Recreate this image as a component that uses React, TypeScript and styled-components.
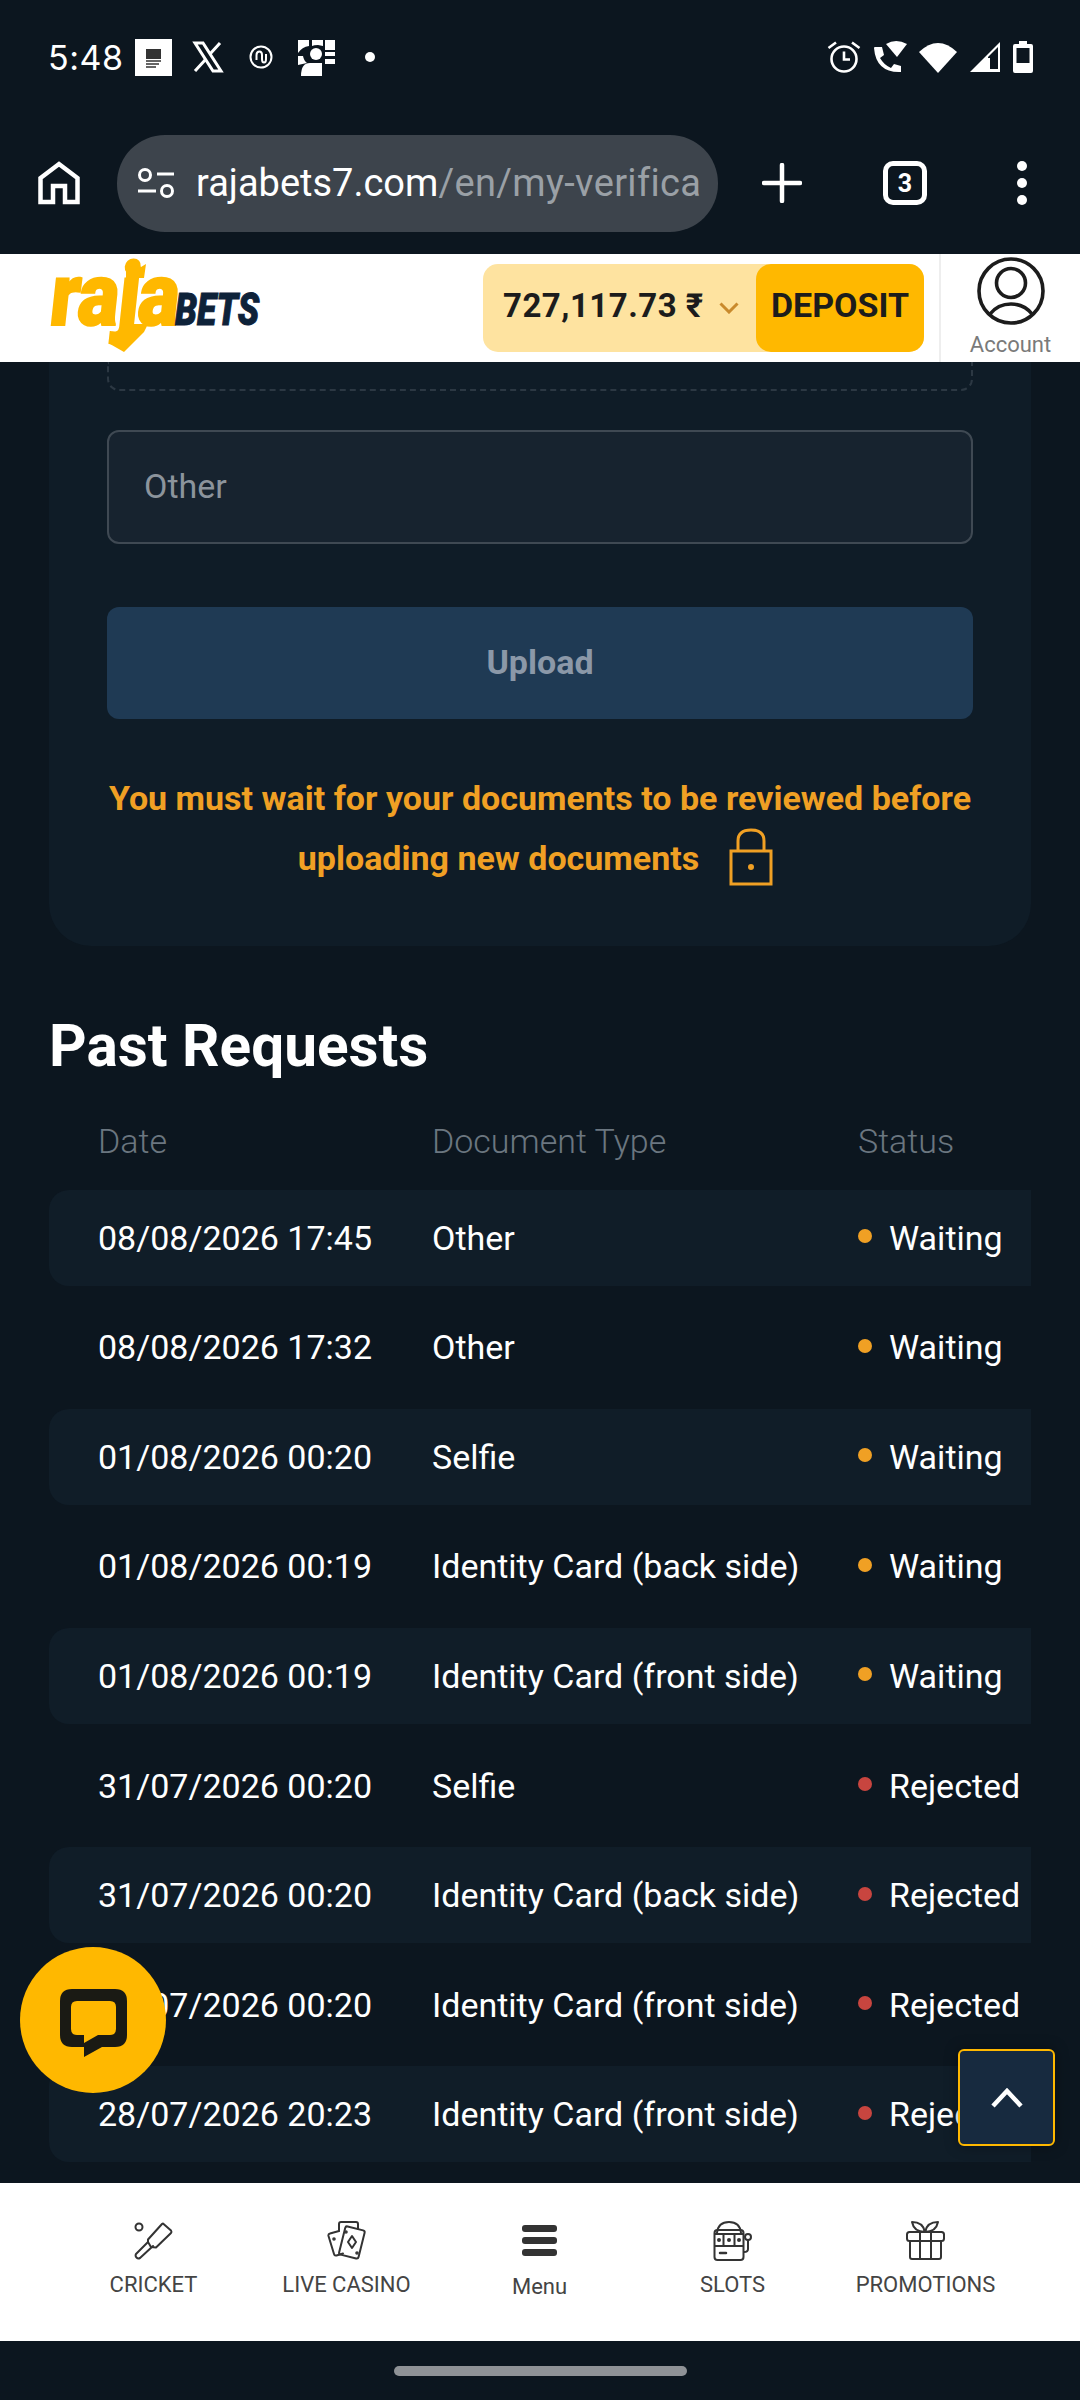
import React from 'react';
import styled, { createGlobalStyle } from 'styled-components';

const GlobalStyle = createGlobalStyle`
  html, body {
    margin: 0;
    padding: 0;
    background: #0c161f;
    font-family: Roboto, "Liberation Sans", sans-serif;
  }
  * { box-sizing: border-box; }
`;

const Screen = styled.div`
  width: 1080px;
  height: 2400px;
  display: flex;
  flex-direction: column;
  overflow: hidden;
  background: #0c161f;
`;

const StatusBar = styled.div`
  height: 114px;
  flex: none;
  display: flex;
  align-items: center;
  padding: 0 47px 0 48px;
  color: #fff;
`;

const Time = styled.span`
  font-family: Inter, Roboto, sans-serif;
  font-size: 34px;
  font-weight: 400;
  letter-spacing: 0.5px;
  width: 87px;
  flex: none;
`;

const NotifIcons = styled.div`
  display: flex;
  align-items: center;
  gap: 20px;
`;

const SysIcons = styled.div`
  margin-left: auto;
  display: flex;
  align-items: center;
  gap: 12px;
`;

const Note = styled.span<{ $w: number }>`
  display: flex;
  width: ${({ $w }) => $w}px;
  justify-content: center;
`;

const ChromeBar = styled.div`
  height: 140px;
  flex: none;
  display: flex;
  align-items: center;
  padding: 0 0 2px 38px;
`;

const UrlPill = styled.div`
  margin-left: 37px;
  width: 601px;
  height: 97px;
  border-radius: 48px;
  background: #3d444c;
  display: flex;
  align-items: center;
  padding-left: 20px;
  white-space: nowrap;
  font-size: 38px;
  color: #fff;

  span {
    color: #9aa0a6;
    letter-spacing: 0.35px;
  }
`;

const UrlText = styled.div`
  margin-left: 21px;
  width: 504px;
`;

const PlusWrap = styled.div`
  margin-left: 44px;
  display: flex;
`;

const TabCount = styled.div`
  margin-left: 81px;
  width: 44px;
  height: 44px;
  border: 5px solid #fff;
  border-radius: 10px;
  color: #fff;
  font-size: 25px;
  font-weight: 700;
  display: flex;
  align-items: center;
  justify-content: center;
`;

const KebabDots = styled.div`
  margin-left: 90px;
  display: flex;
  flex-direction: column;
  gap: 7px;

  i {
    display: block;
    width: 10px;
    height: 10px;
    border-radius: 50%;
    background: #fff;
  }
`;

const SiteHeader = styled.header`
  height: 108px;
  flex: none;
  background: #fff;
  display: flex;
  align-items: center;
  padding-left: 48px;
`;

const Logo = styled.div`
  position: relative;
  width: 212px;
  height: 88px;
  flex: none;
  display: flex;
  align-items: flex-end;
`;

const LogoRaja = styled.span`
  display: block;
  width: 130px;
  height: 62px;
  color: #ffb800;
  font-size: 88px;
  line-height: 62px;
  font-weight: 900;
  letter-spacing: -1px;
  transform-origin: left bottom;
  transform: translateY(-26px) scaleX(0.88) skewX(-7deg);
  -webkit-text-stroke: 2px #ffb800;
  white-space: nowrap;
`;

const LogoBets = styled.span`
  margin-left: -3px;
  margin-bottom: 25px;
  color: #0e2239;
  font-size: 44px;
  line-height: 34px;
  height: 34px;
  font-weight: 900;
  font-style: italic;
  transform-origin: left bottom;
  transform: scaleX(0.8);
  -webkit-text-stroke: 1px #0e2239;
`;

const LogoMark = styled.svg`
  position: absolute;
  left: 0;
  top: 0;
`;

const Wallet = styled.div`
  margin-left: 223px;
  width: 441px;
  height: 88px;
  border-radius: 15px;
  background: #fee3a0;
  display: flex;
  align-items: center;
  padding-left: 20px;
`;

const Balance = styled.span`
  font-size: 33px;
  font-weight: 700;
  color: #1c1c1c;
  letter-spacing: 0.5px;
  white-space: nowrap;
  width: 216px;
  padding-bottom: 5px;
`;

const Caret = styled.svg`
  flex: none;
`;

const DepositButton = styled.div`
  margin-left: auto;
  width: 168px;
  height: 88px;
  border-radius: 15px;
  background: #ffb800;
  color: #1c1c1c;
  font-size: 34px;
  font-weight: 700;
  display: flex;
  align-items: center;
  justify-content: center;
  padding-bottom: 7px;
`;

const AccountBox = styled.div`
  margin-left: 15px;
  width: 141px;
  height: 108px;
  border-left: 2px solid #eeeeee;
  display: flex;
  flex-direction: column;
  align-items: center;
  padding-top: 3px;
  color: #7a7a7a;
  font-size: 22px;
  line-height: 26px;

  svg {
    margin-bottom: 7px;
  }
`;

const Main = styled.main`
  position: relative;
  flex: none;
  height: 1821px;
  overflow: hidden;
  padding: 0 49px;
`;

const UploadCard = styled.section`
  background: #0f1c27;
  border-radius: 0 0 42px 42px;
  padding: 0 58px 58px 58px;
`;

const DropZone = styled.div`
  height: 29px;
  border: 2px dashed #2c3843;
  border-top: none;
  border-radius: 0 0 12px 12px;
`;

const SelectField = styled.div`
  margin-top: 39px;
  height: 114px;
  border: 2px solid #3f4953;
  border-radius: 12px;
  background: #17232f;
  color: #8c949c;
  font-size: 34px;
  display: flex;
  align-items: center;
  padding: 0 0 2px 35px;
`;

const UploadButton = styled.div`
  margin-top: 63px;
  height: 112px;
  border-radius: 12px;
  background: #1f3a54;
  color: #8b98a8;
  font-size: 34px;
  font-weight: 700;
  display: flex;
  align-items: center;
  justify-content: center;
  padding-bottom: 2px;
`;

const WaitNotice = styled.p`
  margin: 50px 0 0;
  color: #f0a024;
  font-size: 34px;
  font-weight: 700;
  line-height: 59px;
  text-align: center;
  white-space: nowrap;

  svg {
    margin: 0 9px 0 30px;
    vertical-align: -16px;
  }
`;

const SectionTitle = styled.h2`
  margin: 65px 0 0;
  color: #fff;
  font-size: 58.5px;
  line-height: 70px;
  font-weight: 700;
`;

const TableClip = styled.div`
  margin-top: 35px;
  overflow: hidden;
`;

const TableInner = styled.div`
  width: 1120px;
  display: flex;
  flex-direction: column;
  gap: 13.6px;
`;

const HeadRow = styled.div`
  display: grid;
  grid-template-columns: 334px 426px 1fr;
  padding-left: 49px;
  height: 50px;
  align-items: center;
  color: #6b7680;
  font-size: 34px;
  font-weight: 300;
  margin-bottom: 10px;
`;

const Row = styled.div<{ $striped: boolean }>`
  display: grid;
  grid-template-columns: 334px 426px 1fr;
  padding-left: 49px;
  height: 96px;
  align-items: center;
  border-radius: 20px;
  color: #fff;
  font-size: 34px;
  background: ${({ $striped }) => ($striped ? '#101d28' : 'transparent')};
`;

const StatusCell = styled.div`
  display: flex;
  align-items: center;
  gap: 17px;
`;

const Dot = styled.i<{ $color: string }>`
  display: block;
  width: 14px;
  height: 14px;
  margin-top: -3px;
  border-radius: 50%;
  background: ${({ $color }) => $color};
`;

const ChatBubble = styled.div`
  position: absolute;
  left: 20px;
  top: 1585px;
  width: 146px;
  height: 146px;
  border-radius: 50%;
  background: #ffb800;
  display: flex;
  align-items: center;
  justify-content: center;
  padding-top: 5px;
`;

const ScrollTop = styled.div`
  position: absolute;
  left: 958px;
  top: 1687px;
  width: 97px;
  height: 97px;
  border: 2px solid #ffb800;
  border-radius: 6px;
  background: #172a3f;
  box-shadow: 0 0 14px rgba(0, 0, 0, 0.35);
  display: flex;
  align-items: center;
  justify-content: center;
`;

const BottomNav = styled.nav`
  height: 158px;
  flex: none;
  background: #fff;
  display: grid;
  grid-template-columns: repeat(5, 193px);
  padding-left: 57px;
  padding-top: 38px;
`;

const NavItem = styled.div`
  display: flex;
  flex-direction: column;
  align-items: center;
  color: #444;
  font-size: 22px;
  line-height: 24px;
  white-space: nowrap;

  svg {
    margin-bottom: 12px;
  }
`;

const MenuBars = styled.div`
  width: 35px;
  height: 40px;
  padding-top: 4px;
  margin-bottom: 14px;
  display: flex;
  flex-direction: column;
  gap: 5px;

  i {
    display: block;
    height: 7px;
    border-radius: 3px;
    background: #333;
  }
`;

const GestureArea = styled.div`
  flex: none;
  height: 59px;
  display: flex;
  justify-content: center;
  padding-top: 25px;
`;

const GesturePill = styled.div`
  width: 293px;
  height: 10px;
  border-radius: 5px;
  background: #8f9296;
`;

const WAITING = '#f0a024';
const REJECTED = '#c8453f';

const requests = [
  { date: '08/08/2026 17:45', type: 'Other', status: 'Waiting' },
  { date: '08/08/2026 17:32', type: 'Other', status: 'Waiting' },
  { date: '01/08/2026 00:20', type: 'Selfie', status: 'Waiting' },
  { date: '01/08/2026 00:19', type: 'Identity Card (back side)', status: 'Waiting' },
  { date: '01/08/2026 00:19', type: 'Identity Card (front side)', status: 'Waiting' },
  { date: '31/07/2026 00:20', type: 'Selfie', status: 'Rejected' },
  { date: '31/07/2026 00:20', type: 'Identity Card (back side)', status: 'Rejected' },
  { date: '31/07/2026 00:20', type: 'Identity Card (front side)', status: 'Rejected' },
  { date: '28/07/2026 20:23', type: 'Identity Card (front side)', status: 'Rejected' },
];

const navStroke = { fill: 'none', stroke: '#333', strokeWidth: 2, strokeLinejoin: 'round', strokeLinecap: 'round' } as const;

const CricketIcon = () => (
  <svg width="40" height="40" viewBox="0 0 40 40" {...navStroke}>
    <circle cx="5" cy="6" r="3.5" />
    <path d="M29 2.5 L37 9.5 Q38 11 37 12 L22 26.5 L17 26 L14 21 L14 18.5 L28 3 Q28.5 2.5 29 2.5 Z" />
    <path d="M14 21 L2 33 Q1 35 2.5 36.5 Q4 38 6 37 L19 25" />
  </svg>
);

const CardsIcon = () => (
  <svg width="40" height="40" viewBox="0 0 40 40" {...navStroke}>
    <path d="M12 10 V3 Q12 1 14 1 H29 Q31 1 31 3 V8" />
    <path d="M12 10 L3 12.5 Q1 13 1.5 15 L7 33 Q7.5 35 9.5 34.5 L16 32.5" />
    <rect x="15" y="7" width="20" height="29" rx="2" transform="rotate(14 25 21)" />
    <path d="M25 15 L29 21 L25 27 L21 21 Z" />
    <circle cx="19" cy="11" r="0.8" />
    <circle cx="7" cy="18" r="0.8" />
    <circle cx="30" cy="32" r="0.8" />
  </svg>
);

const SlotsIcon = () => (
  <svg width="40" height="40" viewBox="0 0 40 40" {...navStroke}>
    <path d="M4 12 Q5 1 16 1 Q27 1 28 12" />
    <rect x="1.5" y="9" width="29" height="30" rx="3" />
    <path d="M2 13 H30 M2 25 H30" />
    <circle cx="6" cy="19" r="1" />
    <circle cx="16" cy="19" r="1" />
    <circle cx="26" cy="19" r="1" />
    <path d="M10.5 13 V25 M21.5 13 V25" />
    <path d="M7 32 H13" strokeWidth="2.5" />
    <circle cx="35" cy="16" r="3" />
    <path d="M35 19 V28 Q35 31 31 31" />
  </svg>
);

const GiftIcon = () => (
  <svg width="40" height="40" viewBox="0 0 40 40" {...navStroke}>
    <rect x="1" y="11" width="37" height="9" rx="2.5" />
    <path d="M4 20 V36 Q4 38 6 38 H33 Q35 38 35 36 V20" />
    <path d="M14 11 V38 M25 11 V38" />
    <path d="M19 11 Q8 11 6 1 Q17 1 19 11 Q21 1 32 1 Q30 11 19 11" />
  </svg>
);

const App = () => (
  <Screen>
    <GlobalStyle />
    <StatusBar>
      <Time>5:48</Time>
      <NotifIcons>
        <svg width="37" height="37" viewBox="0 0 37 37">
          <rect width="37" height="37" fill="#fff" />
          <rect x="11" y="10" width="15" height="10" fill="#333" />
          <path d="M11 22 H26 M11 25 H24 M11 28 H21" stroke="#333" strokeWidth="1.6" />
        </svg>
        <svg width="32" height="32" viewBox="0 0 32 32" fill="none" stroke="#fff">
          <path d="M3 2 H11 L29 30 H21 Z" strokeWidth="3" />
          <path d="M28 2 L18 13 M14 18 L3 30" strokeWidth="3" />
        </svg>
        <Note $w={34}>
          <svg width="24" height="24" viewBox="0 0 24 24" fill="none" stroke="#fff" strokeWidth="2">
            <circle cx="12" cy="12" r="10.5" />
            <path d="M7.5 15 V10 Q7.5 6.5 10.5 6.5 Q13 6.5 13 10 V14 Q13 17.5 15 17.5 Q17 17.5 17 14 V9" />
          </svg>
        </Note>
        <svg width="37" height="37" viewBox="0 0 37 37" fill="#fff">
          <path d="M0 1 H11 V7 Q4 8 0 14 Z M14 1 H25 V7 L20 6 Q16 6 14 7 Z M27 1 H37 V11 H27 Z M27 13 H37 V17 H27 Z M27 20 H37 V25 H27 Z M0 17 H5 Q6 22 9 24 L0 26 Z" />
          <circle cx="18" cy="15" r="6" />
          <path d="M3 37 Q3 24 12 24 H24 Q24 24 24 37 Z" />
        </svg>
        <Note $w={30}>
          <svg width="10" height="10"><circle cx="5" cy="5" r="5" fill="#fff" /></svg>
        </Note>
      </NotifIcons>
      <SysIcons>
        <svg width="34" height="33" viewBox="0 0 34 33" fill="none" stroke="#fff" strokeWidth="2.6">
          <circle cx="17" cy="18" r="12.5" />
          <path d="M17 10.5 V18.5 H23" />
          <path d="M1.5 7 L9 1.5 M32.5 7 L25 1.5" />
        </svg>
        <svg width="34" height="34" viewBox="0 0 34 34" fill="#fff">
          <path d="M1 8 Q1 7 2 7 H9 L11 15 L7 18 Q11 25 18 28 L21 24 L28 26 V32 H26 Q3 32 1 8 Z" />
          <path d="M13 4 Q23 -2 34 4 L24 17 Z" />
        </svg>
        <svg width="38" height="32" viewBox="0 0 38 32" fill="#fff">
          <path d="M0 11 Q19 -7 38 11 L19 32 Z" />
        </svg>
        <svg width="32" height="32" viewBox="0 0 32 32">
          <path d="M31 1 V31 H1 Z" fill="#fff" />
          <path d="M19 16 L29 6 V28 H19 Z" fill="#0c161f" />
          <path d="M21 28 V17 H19 V30 H31 V28 Z" fill="#fff" />
        </svg>
        <svg width="20" height="32" viewBox="0 0 20 32">
          <path d="M6 0 H14 V3 H18 Q20 3 20 5 V30 Q20 32 18 32 H2 Q0 32 0 30 V5 Q0 3 2 3 H6 Z" fill="#fff" />
          <rect x="3.5" y="7" width="13" height="15" fill="#0c161f" />
        </svg>
      </SysIcons>
    </StatusBar>

    <ChromeBar>
      <svg width="42" height="44" viewBox="0 0 42 44" fill="none" stroke="#fff" strokeWidth="4.5">
        <path d="M2.5 41 V17 L21 3 L39.5 17 V41 H27 V25 H15 V41 Z" />
      </svg>
      <UrlPill>
        <svg width="38" height="38" viewBox="0 0 38 38" fill="none" stroke="#fff" strokeWidth="3">
          <circle cx="8" cy="11" r="5.5" />
          <path d="M20 10 H37 M1 27 H19" />
          <circle cx="30" cy="27" r="5.5" />
        </svg>
        <UrlText>rajabets7.com<span>/en/my-verifica</span></UrlText>
      </UrlPill>
      <PlusWrap>
        <svg width="40" height="40" viewBox="0 0 40 40" stroke="#fff" strokeWidth="4.5" strokeLinecap="round">
          <path d="M20 2 V38 M2 20 H38" />
        </svg>
      </PlusWrap>
      <TabCount>3</TabCount>
      <KebabDots><i /><i /><i /></KebabDots>
    </ChromeBar>

    <SiteHeader>
      <Logo>
        <LogoRaja>raja</LogoRaja>
        <LogoBets>BETS</LogoBets>
        <LogoMark width="130" height="88" viewBox="0 0 130 88" fill="#ffb800">
          <path d="M78 0 L83 3 L88 0 L93 3 L98 0 L96 14 H78 Z" />
          <path d="M76 60 H100 L96 68 L76 88 L62 80 Z" />
        </LogoMark>
      </Logo>
      <Wallet>
        <Balance>727,117.73 ₹</Balance>
        <Caret width="20" height="12" viewBox="0 0 20 12" fill="none" stroke="#c98a2c" strokeWidth="3">
          <path d="M1.5 1.5 L10 10 L18.5 1.5" />
        </Caret>
        <DepositButton>DEPOSIT</DepositButton>
      </Wallet>
      <AccountBox>
        <svg width="68" height="68" viewBox="0 0 68 68" fill="none" stroke="#1c1c1c" strokeWidth="3.6">
          <circle cx="34" cy="34" r="32" />
          <circle cx="34" cy="26" r="14.5" />
          <path d="M13 57 Q21 47 34 47 Q47 47 55 57" />
        </svg>
        Account
      </AccountBox>
    </SiteHeader>

    <Main>
      <UploadCard>
        <DropZone />
        <SelectField>Other</SelectField>
        <UploadButton>Upload</UploadButton>
        <WaitNotice>
          You must wait for your documents to be reviewed before
          <br />
          uploading new documents
          <svg width="44" height="58" viewBox="0 0 44 58" fill="none" stroke="#f0a024" strokeWidth="3">
            <rect x="2" y="23" width="40" height="33" />
            <path d="M9 23 V13 Q9 2 22 2 Q35 2 35 13 V23" />
            <circle cx="22" cy="39" r="1.5" fill="#f0a024" />
          </svg>
        </WaitNotice>
      </UploadCard>

      <SectionTitle>Past Requests</SectionTitle>
      <TableClip>
        <TableInner>
          <HeadRow>
            <div>Date</div>
            <div>Document Type</div>
            <div>Status</div>
          </HeadRow>
          {requests.map((r, i) => (
            <Row key={i} $striped={i % 2 === 0}>
              <div>{r.date}</div>
              <div>{r.type}</div>
              <StatusCell>
                <Dot $color={r.status === 'Waiting' ? WAITING : REJECTED} />
                {r.status}
              </StatusCell>
            </Row>
          ))}
        </TableInner>
      </TableClip>

      <ChatBubble>
        <svg width="67" height="68" viewBox="0 0 67 68">
          <path d="M12 0 H55 Q67 0 67 12 V46 Q67 58 55 58 H42 L24 68 V58 H12 Q0 58 0 46 V12 Q0 0 12 0 Z" fill="#1a1a14" />
          <path d="M17 12 H50 Q56 12 56 18 V40 Q56 46 50 46 H38 L24 54 V46 H17 Q11 46 11 40 V18 Q11 12 17 12 Z" fill="#ffb800" />
        </svg>
      </ChatBubble>
      <ScrollTop>
        <svg width="32" height="20" viewBox="0 0 32 20" fill="none" stroke="#fff" strokeWidth="4.5">
          <path d="M2 18 L16 3 L30 18" />
        </svg>
      </ScrollTop>
    </Main>

    <BottomNav>
      <NavItem><CricketIcon />CRICKET</NavItem>
      <NavItem><CardsIcon />LIVE CASINO</NavItem>
      <NavItem><MenuBars><i /><i /><i /></MenuBars>Menu</NavItem>
      <NavItem><SlotsIcon />SLOTS</NavItem>
      <NavItem><GiftIcon />PROMOTIONS</NavItem>
    </BottomNav>
    <GestureArea><GesturePill /></GestureArea>
  </Screen>
);

export default App;
